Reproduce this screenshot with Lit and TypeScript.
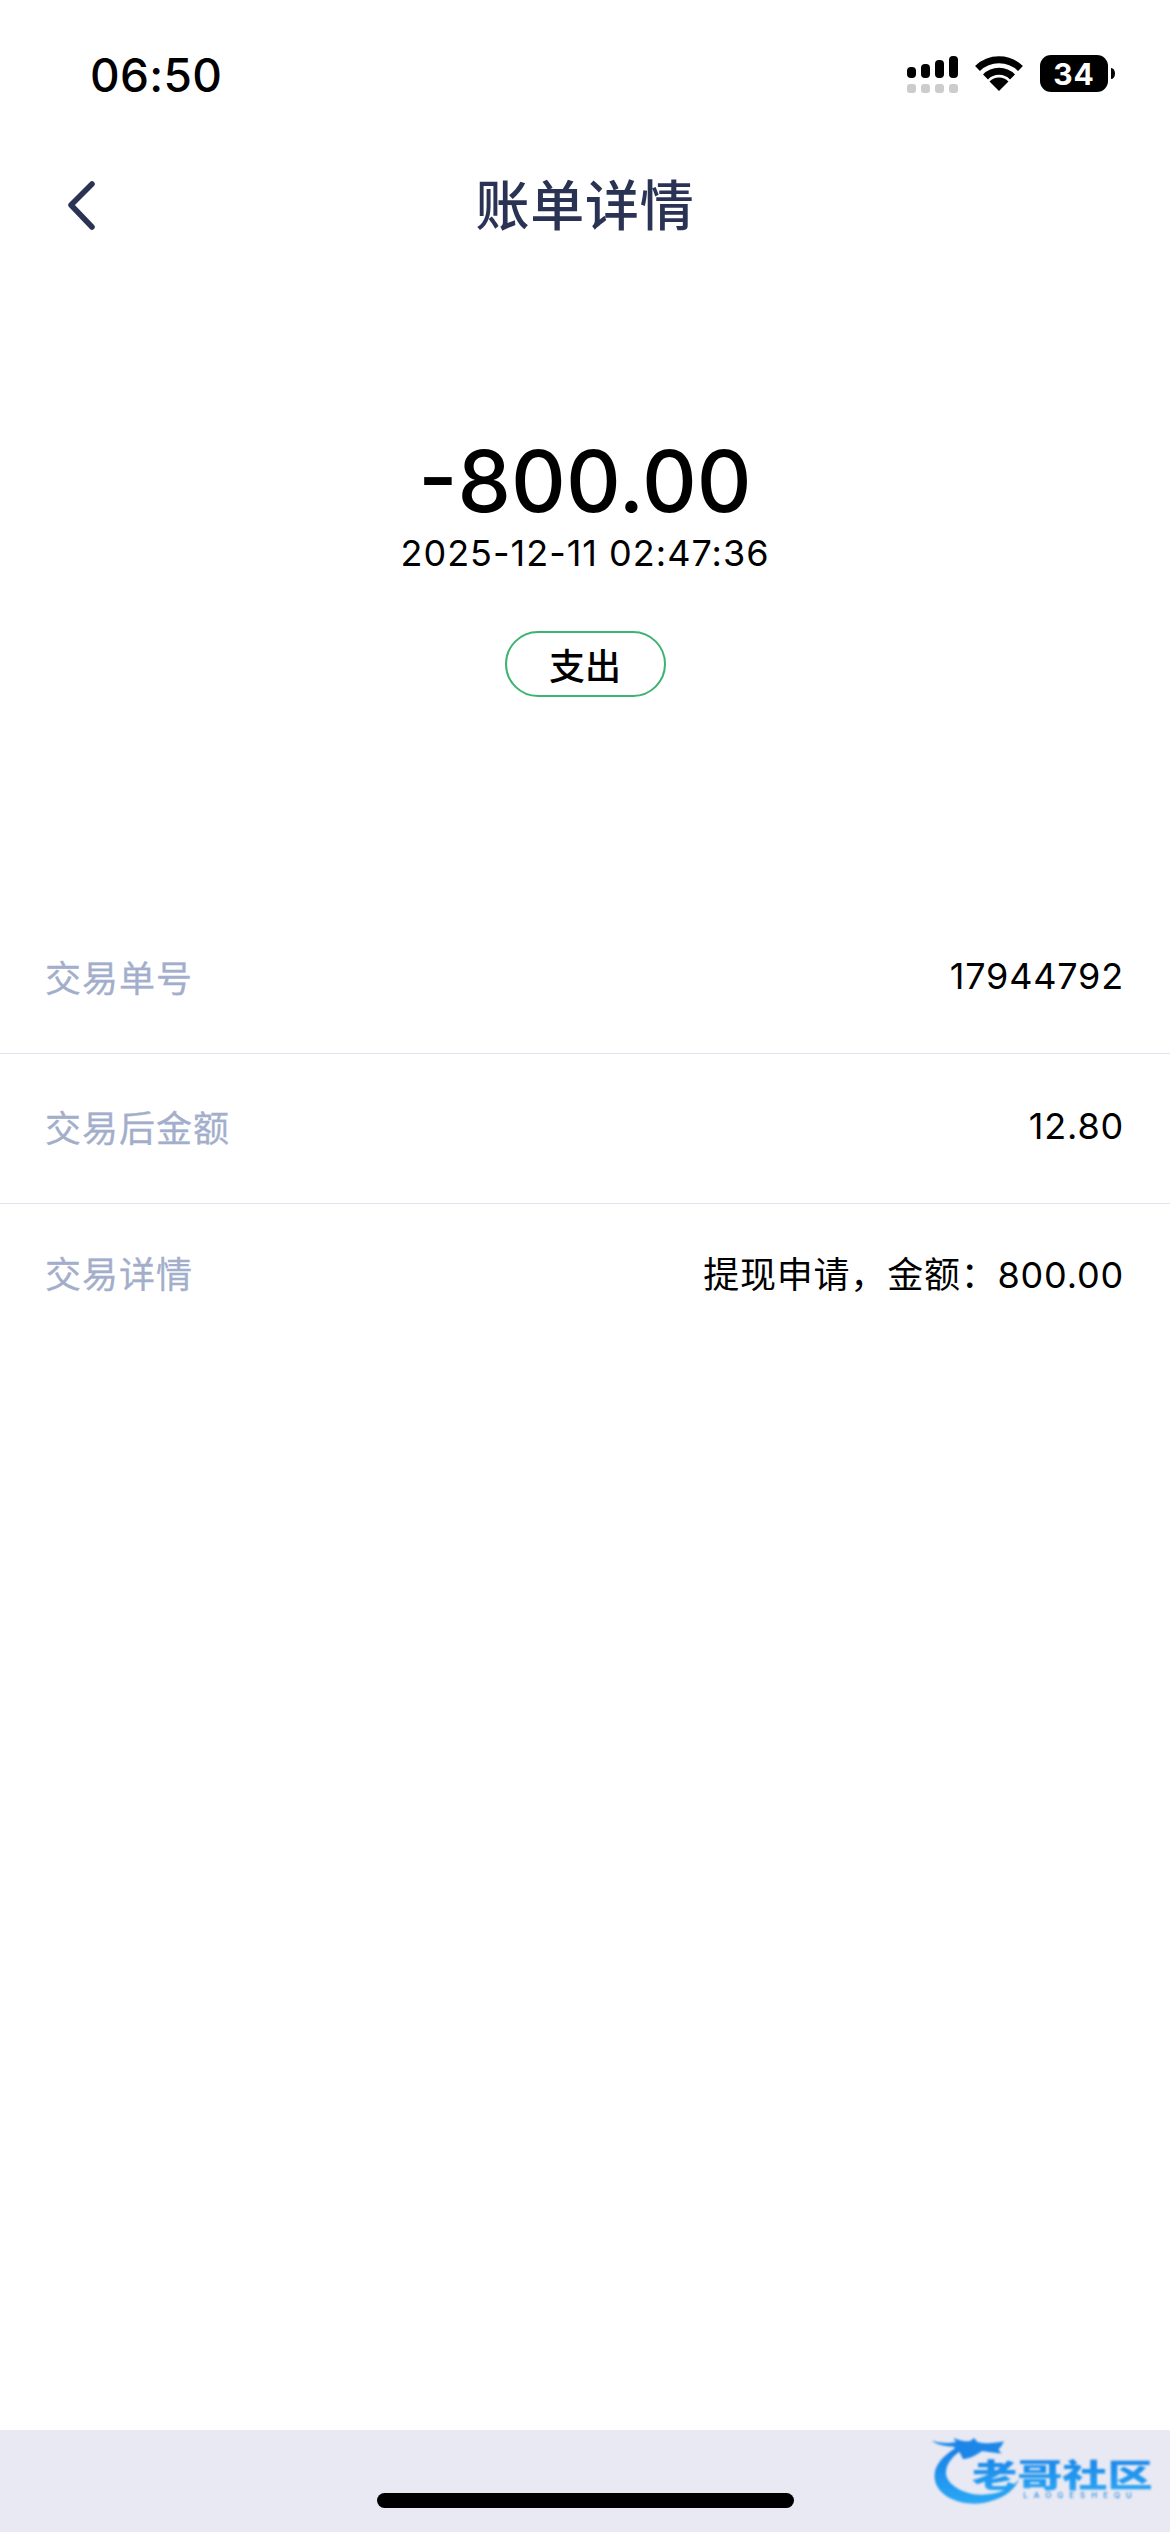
import { LitElement, html, css } from "lit";
import { customElement } from "lit/decorators.js";

const rows = [
  { label: "交易单号", value: "17944792", cls: "" },
  { label: "交易后金额", value: "12.80", cls: "" },
  { label: "交易详情", value: "提现申请，金额：800.00", cls: "last" },
];

@customElement("app-root")
export class AppRoot extends LitElement {
  static styles = css`
    :host { display: block; width: 1170px; height: 2532px; background: #fff;
      font-family: Inter, "Noto Sans CJK SC", sans-serif; color: #000; overflow: hidden; }
    .page { display: flex; flex-direction: column; height: 2532px; }
    .status { display: flex; justify-content: space-between; align-items: flex-start; height: 150px; box-sizing: border-box; padding: 47px 55px 0 90px; }
    .time { font-size: 46px; font-weight: 550; line-height: 56px; letter-spacing: 0.3px; }
    .icons { display: flex; align-items: flex-start; margin-top: 8px; }
    .signal { display: block; width: 51px; height: 37px; margin-right: 17px; margin-top: 1px; }
    .wifi { display: block; width: 48px; height: 35px; margin-right: 17px; margin-top: 1px; }
    .battery { width: 68px; height: 37px; border-radius: 11px; background: #000; color: #fff; display: flex; align-items: center; justify-content: center; font-size: 30px; font-weight: 700; letter-spacing: 1px; }
    .nub { display: block; width: 4px; height: 11px; margin: 13px 0 0 3px; }
    .nav { display: flex; align-items: center; justify-content: center; position: relative; height: 110px; }
    .back { position: absolute; left: 64px; top: 30px; width: 32px; height: 50px; display: block; }
    .title { font-size: 54px; font-weight: 500; color: #2a3353; line-height: 110px; letter-spacing: 0.8px; padding-top: 3px; }
    .hero { display: flex; flex-direction: column; align-items: center; padding-top: 177px; }
    .amount { font-size: 85px; font-weight: 550; line-height: 90px; }
    .date { font-size: 36px; line-height: 44px; margin-top: 4px; letter-spacing: 1px; }
    .pill { margin-top: 56px; width: 161px; height: 66px; box-sizing: border-box; border: 2px solid #3cb371; border-radius: 33px; display: flex; align-items: center; justify-content: center; font-size: 36px; font-weight: 500; }
    .list { margin-top: 207px; }
    .row { display: flex; justify-content: space-between; align-items: center; height: 144px; padding: 0 46px 5px 45px; border-bottom: 1px solid #e3e3ee; font-size: 36px; letter-spacing: 1px; }
    .row.last { height: 135px; border-bottom: 0; }
    .value { letter-spacing: 0.8px; }
    .label { color: #a3aecb; -webkit-text-stroke: 0.3px #a3aecb; }
    .spacer { flex: 1; }
    .bar { position: relative; height: 102px; background: #e9e9f3; display: flex; justify-content: center; }
    .home { margin-top: 63px; width: 417px; height: 15px; border-radius: 8px; background: #000; }
    .logo { position: absolute; right: 0; bottom: 0; width: 270px; height: 122px; display: block; overflow: visible; }
    .logo-cn { font-size: 94px; font-weight: 900; font-family: "Noto Sans CJK SC", sans-serif; }
    .logo-en { font-size: 24px; font-family: Inter, sans-serif; font-weight: 500; }
  `;

  render() {
    return html`
      <div class="page">
        <div class="status">
          <div class="time">06:50</div>
          <div class="icons">
            <svg class="signal" viewBox="0 0 51 37">
              <g fill="#000">
                <rect x="0" y="11" width="9" height="11" rx="4"/>
                <rect x="14" y="8" width="9" height="14" rx="4"/>
                <rect x="28" y="4" width="9" height="18" rx="4"/>
                <rect x="42" y="0" width="9" height="22" rx="4"/>
              </g>
              <g fill="#ccc">
                <rect x="0" y="28" width="9" height="9" rx="3"/>
                <rect x="14" y="28" width="9" height="9" rx="3"/>
                <rect x="28" y="28" width="9" height="9" rx="3"/>
                <rect x="42" y="28" width="9" height="9" rx="3"/>
              </g>
            </svg>
            <svg class="wifi" viewBox="0 0 48 35">
              <path d="M2.5 12.5A31 31 0 0 1 45.5 12.5" fill="none" stroke="#000" stroke-width="7"/>
              <path d="M10.5 21A19 19 0 0 1 37.5 21" fill="none" stroke="#000" stroke-width="7"/>
              <path d="M24 35L14.5 25.5A13.4 13.4 0 0 1 33.5 25.5Z" fill="#000"/>
            </svg>
            <div class="battery">34</div>
            <svg class="nub" viewBox="0 0 4 11"><path d="M0 0A4 5.5 0 0 1 0 11Z" fill="#000"/></svg>
          </div>
        </div>
        <div class="nav">
          <svg class="back" viewBox="0 0 32 50">
            <path d="M28 4L7 25L28 47" fill="none" stroke="#2a3353" stroke-width="5.5" stroke-linecap="round" stroke-linejoin="round"/>
          </svg>
          <div class="title">账单详情</div>
        </div>
        <div class="hero">
          <div class="amount">-800.00</div>
          <div class="date">2025-12-11 02:47:36</div>
          <div class="pill">支出</div>
        </div>
        <div class="list">
          ${rows.map(r => html`<div class="row ${r.cls}"><span class="label">${r.label}</span><span class="value">${r.value}</span></div>`)}
        </div>
        <div class="spacer"></div>
        <div class="bar">
          <div class="home"></div>
          <svg class="logo" viewBox="0 0 810 366">
            <defs>
              <linearGradient id="lg" x1="0" y1="0" x2="0" y2="1">
                <stop offset="0" stop-color="#1780e6"/>
                <stop offset="1" stop-color="#2aa8f5"/>
              </linearGradient>
              <filter id="soft"><feGaussianBlur stdDeviation="2.5"/></filter>
            </defs>
            <g filter="url(#soft)">
              <path d="M170 112C125 140 100 170 104 205C110 262 190 292 255 278C300 268 338 250 358 208C330 238 290 256 240 254C190 252 135 222 138 185C140 160 160 135 190 118Z" fill="url(#lg)"/>
              <path d="M96 92C125 100 145 100 168 96L160 84C180 92 195 96 212 92L222 84L232 96C255 102 285 100 312 94L302 112C290 118 300 126 306 130C280 130 262 124 245 124C230 134 205 150 188 146C182 130 175 120 160 110C140 108 112 106 96 92Z" fill="#1b86e8"/>
              <text class="logo-cn" x="216" y="230" fill="url(#lg)" textLength="542" lengthAdjust="spacingAndGlyphs">老哥社区</text>
              <text class="logo-en" x="370" y="265" fill="#2f8fe0" textLength="326">LAOGESHEQU</text>
            </g>
          </svg>
        </div>
      </div>
    `;
  }
}
